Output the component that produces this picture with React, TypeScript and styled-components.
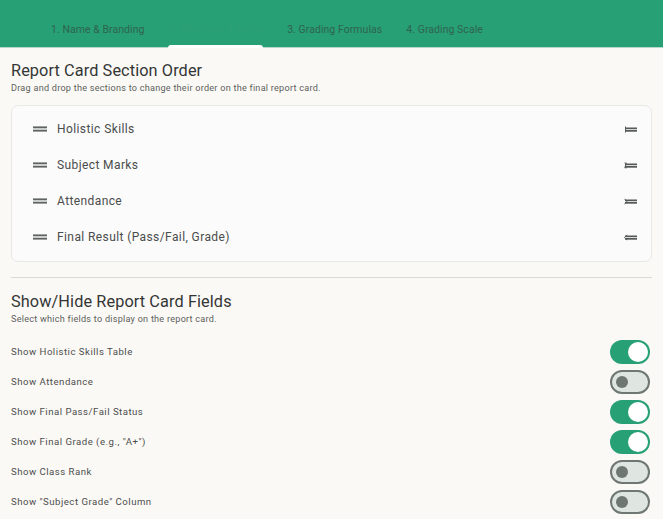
import React from 'react';
import styled, { createGlobalStyle } from 'styled-components';

const GlobalStyle = createGlobalStyle`
  html, body {
    margin: 0;
    padding: 0;
    background: #fbf9f5;
    font-family: Roboto, "Liberation Sans", sans-serif;
    overflow: hidden;
  }
`;

const Page = styled.div`
  width: 663px;
  height: 519px;
  overflow: hidden;
`;

const TabBar = styled.nav`
  height: 47px;
  background: #27a075;
  display: flex;
  align-items: stretch;
  gap: 24px;
  padding-left: 51px;
  border-bottom: 1px solid #b5d8c8;
`;

const Tab = styled.div<{ $active?: boolean }>`
  position: relative;
  padding-top: 23px;
  font-size: 10.4px;
  line-height: 14px;
  letter-spacing: 0.1px;
  white-space: nowrap;
  color: ${p => (p.$active ? '#2f9f78' : '#2f6350')};

  ${p =>
    p.$active &&
    `
    &::after {
      content: '';
      position: absolute;
      left: 0;
      right: 0;
      bottom: -1px;
      height: 3px;
      border-radius: 3px 3px 0 0;
      background: #ffffff;
    }
  `}
`;

const Content = styled.main`
  padding: 13px 11px 0;
`;

const Title = styled.h2`
  margin: 0;
  font-size: 16.3px;
  line-height: 20px;
  font-weight: 400;
  letter-spacing: 0.1px;
  color: #333635;
`;

const Subtitle = styled.p`
  margin: 1px 0 0;
  font-size: 9.1px;
  line-height: 12px;
  letter-spacing: 0.25px;
  color: #5c5f5d;
`;

const OrderCard = styled.div`
  margin-top: 11px;
  height: 157px;
  box-sizing: border-box;
  padding: 5px 14px 0 21px;
  background: #fbfbfb;
  border: 1px solid #e8e8e6;
  border-radius: 7px;
`;

const OrderRow = styled.div`
  height: 36px;
  display: flex;
  align-items: center;
  gap: 11px;
`;

const OrderLabel = styled.span`
  flex: 1;
  margin-left: -1px;
  font-size: 12px;
  letter-spacing: 0.4px;
  color: #4a4c4b;
`;

const Divider = styled.hr`
  margin: 15px 0 0;
  border: 0;
  height: 1px;
  background: #d5dcd6;
`;

const FieldsHeader = styled.div`
  margin-top: 14px;
  margin-bottom: 12px;
`;

const FieldRow = styled.div`
  height: 30px;
  display: flex;
  align-items: center;
  justify-content: space-between;
  padding-right: 2px;
`;

const FieldLabel = styled.span`
  margin-bottom: 2px;
  font-size: 9.6px;
  letter-spacing: 0.5px;
  color: #4c4e4d;
`;

const Track = styled.div<{ $on: boolean }>`
  width: 40px;
  height: 24px;
  box-sizing: border-box;
  border-radius: 12px;
  display: flex;
  align-items: center;
  justify-content: ${p => (p.$on ? 'flex-end' : 'flex-start')};
  padding: ${p => (p.$on ? '0 2px' : '0 4px')};
  background: ${p => (p.$on ? '#27a075' : '#dfe5e0')};
  border: ${p => (p.$on ? '0' : '2px solid #6f7772')};
`;

const Knob = styled.div<{ $on: boolean }>`
  width: ${p => (p.$on ? '20px' : '12px')};
  height: ${p => (p.$on ? '20px' : '12px')};
  border-radius: 50%;
  background: ${p => (p.$on ? '#ffffff' : '#6f7772')};
`;

const DragHandle = () => (
  <svg width="14" height="6" viewBox="0 0 14 6" style={{ flex: 'none' }}>
    <rect y="0.4" width="14" height="1.9" fill="#5f6461" />
    <rect y="3.7" width="14" height="1.9" fill="#5f6461" />
  </svg>
);

// the small mark left of the two lines differs per row
const marks = [
  'M1.5 0.5V6.5',
  'M0.6 1L2.4 1L0.8 5.8L2.8 5.8',
  'M0.6 0.8L2.8 3.5L0.6 6.2',
  'M3 0.8L0.5 3.5L3 6.2',
];

const OrderIcon = ({ index }: { index: number }) => (
  <svg width="13" height="7" viewBox="0 0 13 7" style={{ flex: 'none' }}>
    <path d={marks[index]} stroke="#5a5e5b" strokeWidth="1" fill="none" />
    <rect x="1" y="1.5" width="12" height="1.7" fill="#555957" />
    <rect x="1" y="4" width="12" height="1.7" fill="#555957" />
  </svg>
);

const sections = ['Holistic Skills', 'Subject Marks', 'Attendance', 'Final Result (Pass/Fail, Grade)'];

const fields = [
  { label: 'Show Holistic Skills Table', on: true },
  { label: 'Show Attendance', on: false },
  { label: 'Show Final Pass/Fail Status', on: true },
  { label: 'Show Final Grade (e.g., "A+")', on: true },
  { label: 'Show Class Rank', on: false },
  { label: 'Show "Subject Grade" Column', on: false },
];

const App: React.FC = () => {
  return (
    <Page>
      <GlobalStyle />
      <TabBar>
        <Tab>1. Name &amp; Branding</Tab>
        <Tab $active>2. Structure &amp; Fields</Tab>
        <Tab>3. Grading Formulas</Tab>
        <Tab>4. Grading Scale</Tab>
      </TabBar>
      <Content>
        <Title>Report Card Section Order</Title>
        <Subtitle>Drag and drop the sections to change their order on the final report card.</Subtitle>
        <OrderCard>
          {sections.map((s, i) => (
            <OrderRow key={s}>
              <DragHandle />
              <OrderLabel>{s}</OrderLabel>
              <OrderIcon index={i} />
            </OrderRow>
          ))}
        </OrderCard>
        <Divider />
        <FieldsHeader>
          <Title>Show/Hide Report Card Fields</Title>
          <Subtitle>Select which fields to display on the report card.</Subtitle>
        </FieldsHeader>
        {fields.map(f => (
          <FieldRow key={f.label}>
            <FieldLabel>{f.label}</FieldLabel>
            <Track $on={f.on}>
              <Knob $on={f.on} />
            </Track>
          </FieldRow>
        ))}
      </Content>
    </Page>
  );
};

export default App;
